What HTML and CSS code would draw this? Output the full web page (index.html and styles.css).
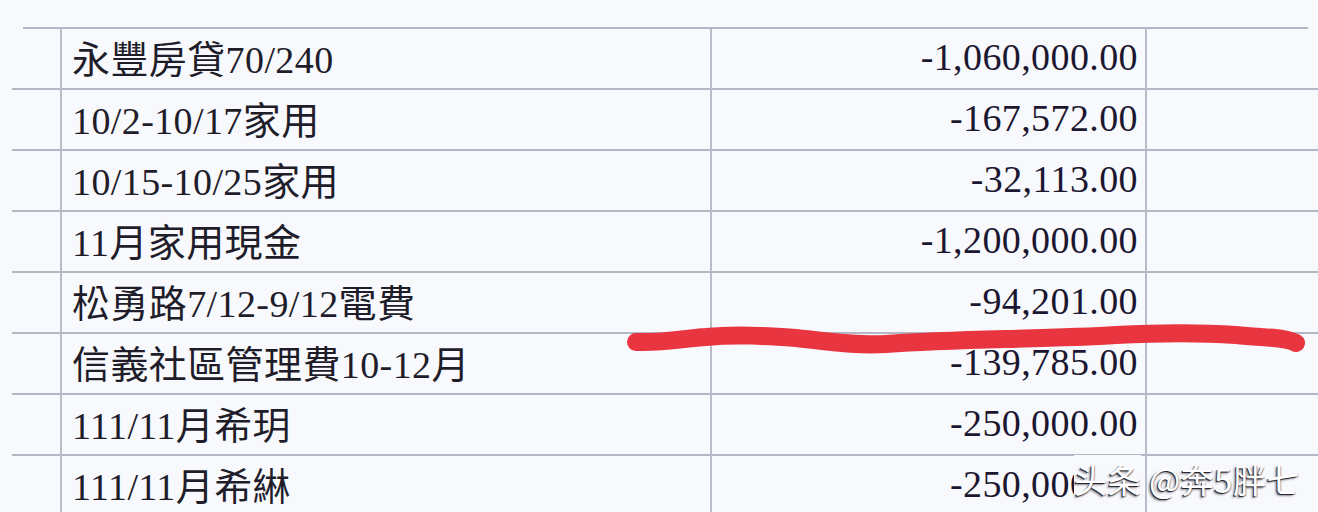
FILE: index.html
```html
<!DOCTYPE html>
<html lang="zh-Hant">
<head>
<meta charset="utf-8">
<title>帳目</title>
<link rel="stylesheet" href="styles.css">
</head>
<body>
<div class="page">
  <div class="sheet">
    <div class="top-rule"></div>
    <div class="row"><div class="c0"></div><div class="c1">永豐房貸70/240</div><div class="c2">-1,060,000.00</div><div class="c3"></div></div>
    <div class="row"><div class="c0"></div><div class="c1">10/2-10/17家用</div><div class="c2">-167,572.00</div><div class="c3"></div></div>
    <div class="row"><div class="c0"></div><div class="c1">10/15-10/25家用</div><div class="c2">-32,113.00</div><div class="c3"></div></div>
    <div class="row"><div class="c0"></div><div class="c1">11月家用現金</div><div class="c2">-1,200,000.00</div><div class="c3"></div></div>
    <div class="row"><div class="c0"></div><div class="c1">松勇路7/12-9/12電費</div><div class="c2">-94,201.00</div><div class="c3"></div></div>
    <div class="row"><div class="c0"></div><div class="c1">信義社區管理費10-12月</div><div class="c2">-139,785.00</div><div class="c3"></div></div>
    <div class="row"><div class="c0"></div><div class="c1">111/11月希玥</div><div class="c2">-250,000.00</div><div class="c3"></div></div>
    <div class="row"><div class="c0"></div><div class="c1">111/11月希綝</div><div class="c2">-250,000.00</div><div class="c3"></div></div>
  </div>
  <svg class="scribble" width="700" height="40" viewBox="0 0 700 40" aria-hidden="true">
    <path d="M10 26 C 40 27, 60 22, 80 21 C 110 18, 140 20, 170 22 C 200 25, 230 30, 260 28 C 300 25, 340 24, 380 23 C 420 22, 460 21, 490 19 C 530 17, 580 17, 610 19 C 640 22, 660 21, 670 27" fill="none" stroke="#e8353f" stroke-width="18" stroke-linecap="round" stroke-linejoin="round"/>
  </svg>
  <div class="watermark"><span class="wm-head">头条</span> @奔5胖七</div>
</div>
</body>
</html>
```

FILE: styles.css
```css
html, body {
  margin: 0;
  padding: 0;
  background: #f8f9fd;
}

.page {
  position: relative;
  width: 1318px;
  height: 512px;
  overflow: hidden;
  padding-top: 27px;
  box-sizing: border-box;
}

.sheet {
  margin-left: 12px;
  display: flex;
  flex-direction: column;
}

.top-rule {
  height: 2px;
  margin-left: 11px;
  width: 1285px;
  background: #b4b8c6;
}

.row {
  display: grid;
  grid-template-columns: 50px 650px 435px 1fr;
  height: 61px;
  border-bottom: 2px solid #b4b8c6;
  box-sizing: border-box;
  font-family: "Liberation Serif", "Noto Sans CJK TC", serif;
  font-size: 38px;
  color: #1c1730;
}

.c0,
.c1,
.c2 {
  border-right: 2px solid #b9bdca;
}

.c0 {
  margin-top: -2px;
}

.c1 {
  display: flex;
  align-items: center;
  padding-left: 10px;
  padding-bottom: 5px;
  white-space: nowrap;
  font-weight: 400;
  color: #1f1d2a;
  letter-spacing: 0.4px;
}

.c2 {
  display: flex;
  align-items: center;
  justify-content: flex-end;
  padding-right: 7px;
  padding-bottom: 5px;
  letter-spacing: 0.4px;
  white-space: nowrap;
}

.scribble {
  position: absolute;
  left: 626px;
  top: 316px;
}

.watermark {
  position: absolute;
  left: 1074px;
  top: 456px;
  font-family: "Noto Sans CJK SC", "Noto Sans", sans-serif;
  font-size: 33px;
  line-height: 46px;
  letter-spacing: 0.5px;
  color: #ffffff;
  white-space: nowrap;
  text-shadow: -1px 1px 0 rgba(30, 30, 40, 0.9), -2px 2px 2px rgba(30, 30, 40, 0.5), 1px 1px 1px rgba(30, 30, 40, 0.4);
}

.wm-head {
  background: #f8f9fd;
}
```
